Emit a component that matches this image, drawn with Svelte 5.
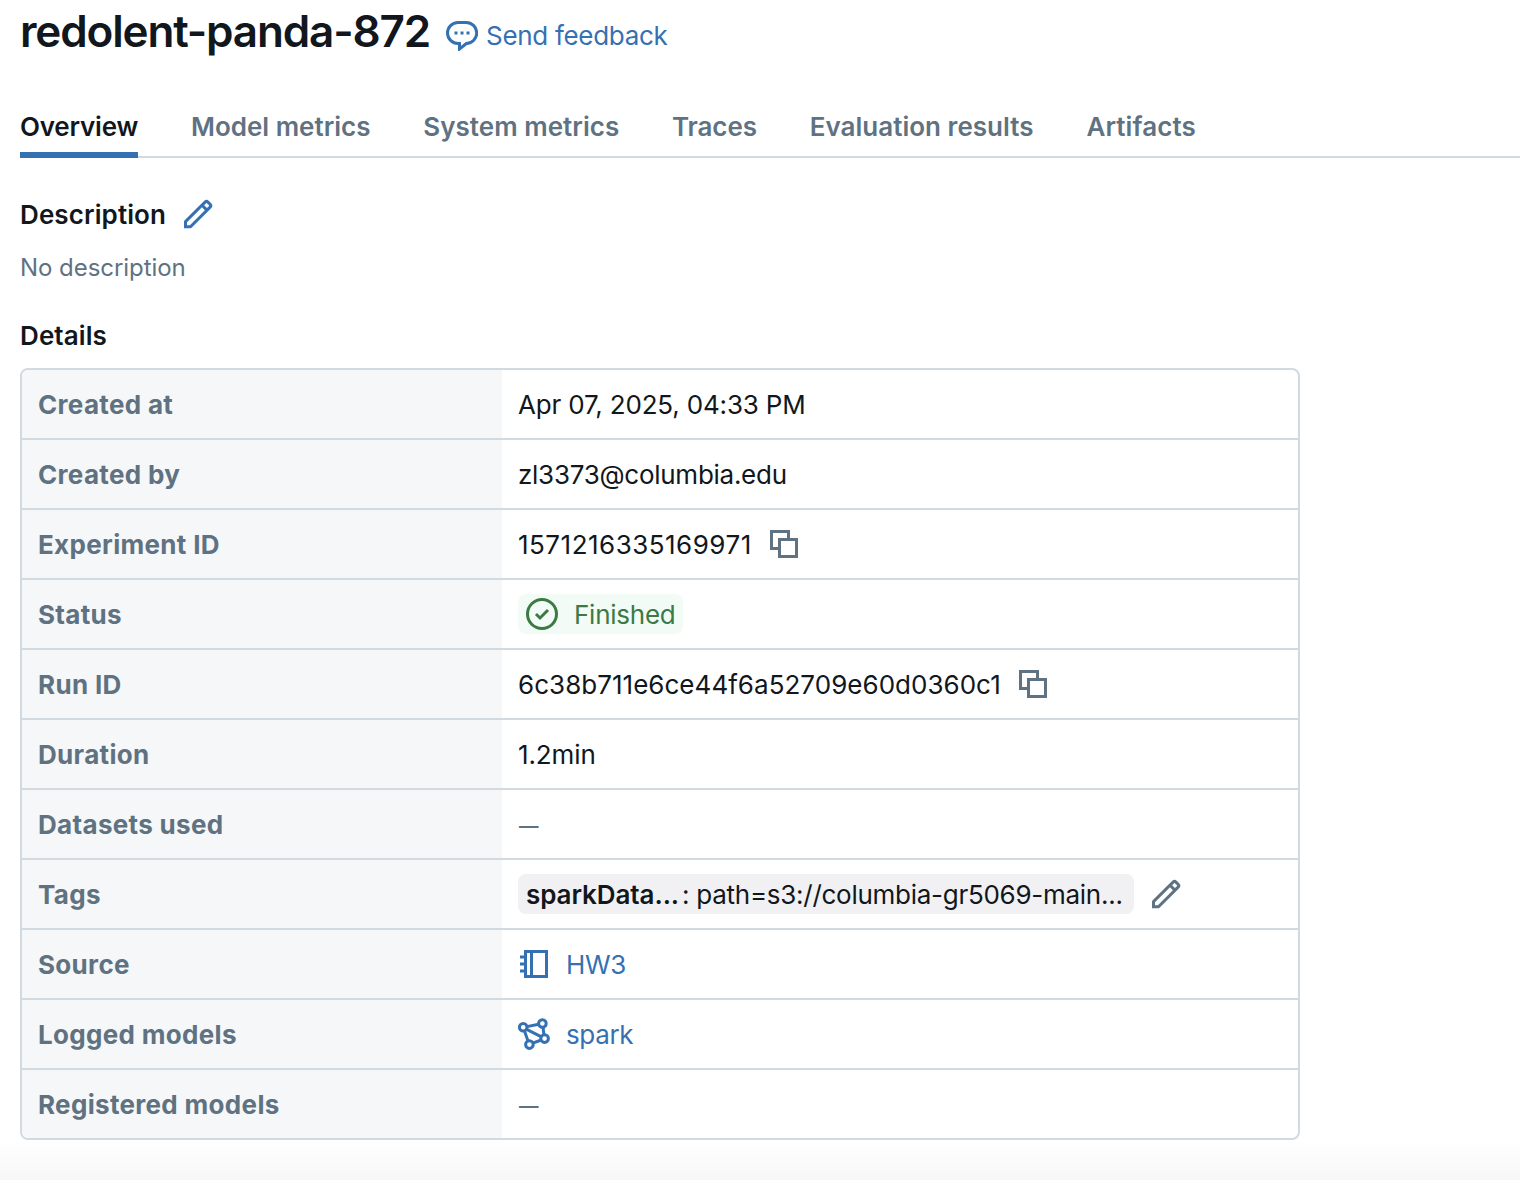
<script>
  const tabs = ['Overview', 'Model metrics', 'System metrics', 'Traces', 'Evaluation results', 'Artifacts'];
  const rows = [
    { label: 'Created at', kind: 'text', value: 'Apr 07, 2025, 04:33 PM', cls: 'date' },
    { label: 'Created by', kind: 'text', value: 'zl3373@columbia.edu', cls: 'mail' },
    { label: 'Experiment ID', kind: 'copy', value: '1571216335169971', cls: 'exp' },
    { label: 'Status', kind: 'status', value: 'Finished' },
    { label: 'Run ID', kind: 'copy', value: '6c38b711e6ce44f6a52709e60d0360c1', cls: 'run' },
    { label: 'Duration', kind: 'text', value: '1.2min', cls: 'dur' },
    { label: 'Datasets used', kind: 'empty' },
    { label: 'Tags', kind: 'tag' },
    { label: 'Source', kind: 'notebook', value: 'HW3' },
    { label: 'Logged models', kind: 'model', value: 'spark' },
    { label: 'Registered models', kind: 'empty' }
  ];
</script>

{#snippet pencil()}
  <svg class="icon" viewBox="0 0 16 16" fill="currentColor">
    <path fill-rule="evenodd" d="M13.487 1.513a1.75 1.75 0 0 0-2.474 0L1.22 11.306a.75.75 0 0 0-.22.53v3.25h3.25a.75.75 0 0 0 .53-.22l9.793-9.793a1.75 1.75 0 0 0 0-2.475zm-1.414 1.06a.25.25 0 0 1 .354 0l1.086 1.086a.25.25 0 0 1 0 .354L12.5 5.026 11.06 3.586zM10 4.646l1.44 1.44-7.5 7.5H2.5v-1.44z" />
  </svg>
{/snippet}

{#snippet copy()}
  <svg class="icon" viewBox="0 0 16 16" fill="currentColor">
    <path fill-rule="evenodd" d="M1 1h10v4h4v10H5v-4H1zM9.5 5V2.5h-7v7H5V5zm-3 8.5h7v-7h-7z" />
  </svg>
{/snippet}

<main>
  <header>
    <h1>redolent-panda-872</h1>
    <a class="feedback">
      <svg class="icon" viewBox="0 0 16 16" fill="none" stroke="currentColor" stroke-width="1.5">
        <path d="M6 1.75h4a5.25 5.25 0 0 1 .2 10.5L6.75 15v-2.75H6a5.25 5.25 0 0 1 0-10.5z" />
        <path stroke="none" fill="currentColor" d="M4.25 6.25h1.5v1.5h-1.5zM7.25 6.25h1.5v1.5h-1.5zM10.25 6.25h1.5v1.5h-1.5z" />
      </svg>
      <span>Send feedback</span>
    </a>
  </header>

  <nav>
    {#each tabs as tab, i}
      <span class="tab t{i}" class:active={i === 0}>{tab}</span>
    {/each}
  </nav>

  <section class="description">
    <h2><span>Description</span> {@render pencil()}</h2>
    <p>No description</p>
  </section>

  <h2 class="details">Details</h2>
  <div class="table">
    {#each rows as row}
      <div class="row">
        <div class="label">{row.label}</div>
        <div class="value">
          {#if row.kind === 'text'}
            <span class="text {row.cls}">{row.value}</span>
          {:else if row.kind === 'copy'}
            <span class="text {row.cls}">{row.value}</span>
            <span class="action">{@render copy()}</span>
          {:else if row.kind === 'status'}
            <span class="status">
              <svg class="icon" viewBox="0 0 16 16" fill="currentColor">
                <circle cx="8" cy="8" r="7.25" fill="none" stroke="currentColor" stroke-width="1.5" />
                <path d="M11.53 6.53 7 11.06 4.47 8.53l1.06-1.06L7 8.94l3.47-3.47z" />
              </svg>
              <span class="text">{row.value}</span>
            </span>
          {:else if row.kind === 'empty'}
            <span class="text empty">—</span>
          {:else if row.kind === 'tag'}
            <span class="tag"><b>sparkData...</b><span>: path=s3://columbia-gr5069-main...</span></span>
            <span class="action">{@render pencil()}</span>
          {:else if row.kind === 'notebook'}
            <a class="link">
              <svg class="icon" viewBox="0 0 16 16" fill="none" stroke="currentColor" stroke-width="1.5">
                <rect x="3.75" y="1.75" width="10.5" height="12.5" />
                <path d="M6.75 1.75v12.5M1 4.5h3M1 8h3M1 11.5h3" />
              </svg>
              <span class="text">{row.value}</span>
            </a>
          {:else}
            <a class="link">
              <svg class="icon" viewBox="0 0 16 16" fill="none" stroke="currentColor" stroke-width="1.5">
                <circle cx="2.6" cy="4.65" r="1.9" />
                <circle cx="12.2" cy="2.75" r="1.9" />
                <circle cx="13.3" cy="10.3" r="1.9" />
                <circle cx="5.7" cy="13.3" r="1.9" />
                <path d="M4.4 4.3l6-1.2M12.5 4.6l.5 3.9M7.4 12.6l4.2-1.6M3.2 6.4l1.8 5.1M4.1 5.6l7.6 3.8" />
              </svg>
              <span class="text">{row.value}</span>
            </a>
          {/if}
        </div>
      </div>
    {/each}
  </div>
  <footer></footer>
</main>

<style>
  :global(body) { background: #fff; overflow: hidden; }
  main {
    width: 1520px;
    height: 1180px;
    box-sizing: border-box;
    padding-left: 20px;
    display: flex;
    flex-direction: column;
    overflow: hidden;
    font: 26px/40px Inter, 'Liberation Sans', sans-serif;
    color: #11171c;
    white-space: nowrap;
  }
  h1, h2, p { margin: 0; }
  .icon { display: block; width: 32px; height: 32px; flex: none; }
  header { display: flex; height: 104px; }
  h1 { width: 426px; font-size: 44px; line-height: 63px; font-weight: 600; letter-spacing: -1.15px; }
  .feedback { display: flex; gap: 8px; height: 40px; padding-top: 16px; color: #3571b2; letter-spacing: -0.3px; }
  .feedback .icon { margin-top: 3px; }
  nav { display: flex; gap: 52.8px; height: 54px; box-sizing: border-box; flex: none; border-bottom: 2px solid #d1d9e1; line-height: 46px; }
  .tab { height: 54px; box-sizing: border-box; font-weight: 600; color: #5f7281; }
  .active { color: #11171c; border-bottom: 6px solid #3571b2; }
  .t0 { letter-spacing: -0.2px; }
  .t2 { letter-spacing: 0.03px; }
  .t3 { letter-spacing: -0.12px; }
  .t4 { letter-spacing: 0.03px; }
  .t5 { letter-spacing: 0.1px; }
  h2 { font-size: 26px; line-height: 40px; font-weight: 600; letter-spacing: 0.1px; }
  .description { padding-top: 36px; }
  .description h2 { display: flex; align-items: center; gap: 16px; height: 40px; }
  .description h2 span { padding-top: 1px; }
  .description .icon { color: #3571b2; }
  p { padding-top: 14px; font-size: 24px; line-height: 40px; color: #5f7281; letter-spacing: -0.05px; }
  .details { padding-top: 28px; height: 52px; }
  .table { width: 1276px; border: 2px solid #d1d9e1; border-radius: 8px; overflow: hidden; flex: none; }
  .row { display: flex; height: 70px; box-sizing: border-box; border-bottom: 2px solid #d1d9e1; }
  .row:last-child { height: 68px; border-bottom: 0; }
  .label { width: 480px; box-sizing: border-box; padding: 15px 16px; font-weight: 700; letter-spacing: 0.32px; color: #5f7281; background: #f6f7f9; }
  .value { display: flex; align-items: center; padding-left: 16px; }
  .text { padding-top: 2px; }
  .date { letter-spacing: -0.17px; }
  .mail { letter-spacing: -0.27px; }
  .exp { letter-spacing: 0.49px; }
  .run { letter-spacing: 0.03px; }
  .dur { letter-spacing: -0.12px; }
  .action { margin-left: 16px; color: #5f7281; }
  .status { display: flex; align-items: center; gap: 16px; height: 40px; padding: 0 8px; border-radius: 8px; color: #3b7a43; background: #f3fbf6; letter-spacing: -0.25px; }
  .empty { color: #5f7281; font-size: 19.5px; font-weight: 600; padding-left: 1px; padding-top: 3px; }
  .tag { width: 616px; height: 40px; line-height: 42px; box-sizing: border-box; padding: 0 8px; border-radius: 8px; background: #f1f1f3; }
  .tag b { font-weight: 600; letter-spacing: -0.08px; }
  .tag span { margin-left: 3px; letter-spacing: -0.27px; }
  .link { display: flex; align-items: center; gap: 16px; color: #3571b2; letter-spacing: -0.35px; }
  footer { flex: 1; margin-left: -20px; background: linear-gradient(#fff, #f7f7f7); }
</style>
